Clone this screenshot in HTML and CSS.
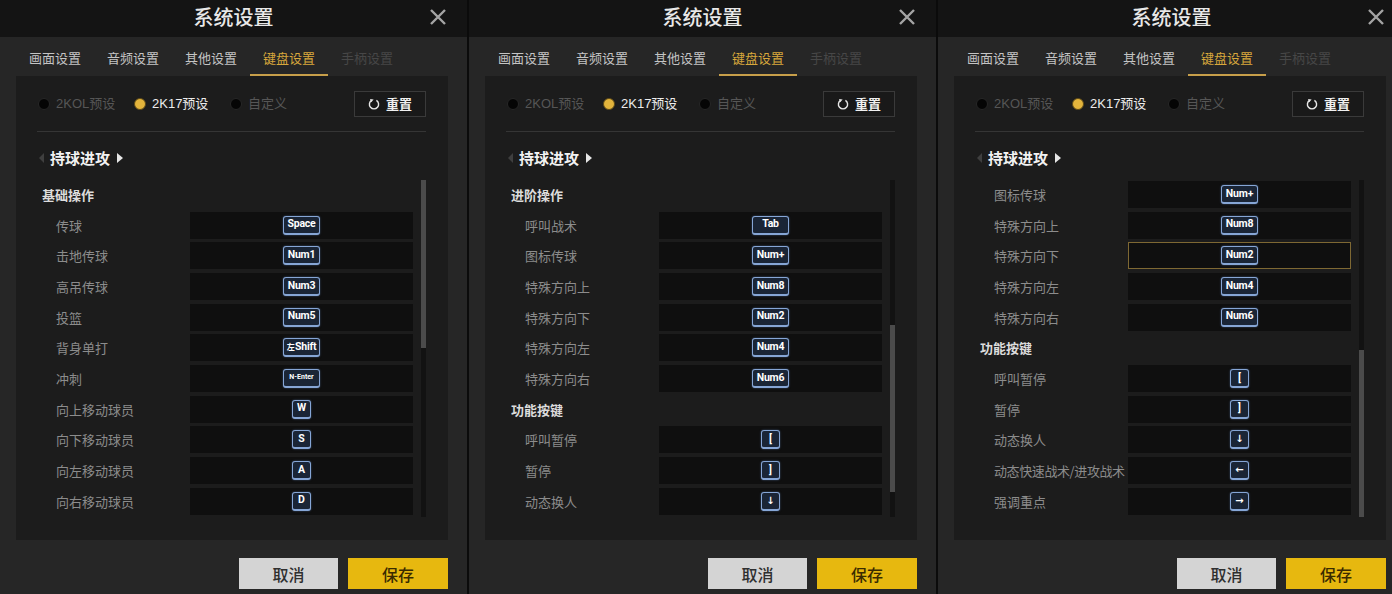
FILE: index.html
```html
<!DOCTYPE html>
<html lang="zh-CN">
<head>
  <meta charset="UTF-8">
  <title>系统设置 - 键盘设置</title>
  <link rel="stylesheet" href="styles.css">
</head>
<body>

<!-- 第一页：基础操作 -->
<div class="panel">
  <div class="title-bar">
    <div class="title">系统设置</div>
    <svg class="close" viewBox="0 0 18 18"><path d="M2 2 L16 16 M16 2 L2 16"/></svg>
  </div>
  <div class="tabs">
    <div class="tab">画面设置</div>
    <div class="tab">音频设置</div>
    <div class="tab">其他设置</div>
    <div class="tab active">键盘设置</div>
    <div class="tab disabled">手柄设置</div>
  </div>
  <div class="content">
    <div class="presets">
      <div class="option"><span class="radio"></span><span class="option-label">2KOL预设</span></div>
      <div class="option checked"><span class="radio"></span><span class="option-label">2K17预设</span></div>
      <div class="option"><span class="radio"></span><span class="option-label">自定义</span></div>
      <div class="reset">
        <svg class="reset-icon" viewBox="0 0 12 12"><path d="M3.6 2.4 A4.6 4.6 0 1 0 8.4 2.4"/><path class="head" d="M2 1 L5.6 1.4 L3.2 4.2 Z"/></svg>
        <span>重置</span>
      </div>
    </div>
    <div class="group-header">
      <span class="arrow-left"></span>
      <span class="group-name">持球进攻</span>
      <span class="arrow-right"></span>
    </div>
    <div class="list-wrap">
      <div class="list">
        <div class="section">基础操作</div>
        <div class="row"><div class="row-label">传球</div><div class="key-box"><span class="key wide">Space</span></div></div>
        <div class="row"><div class="row-label">击地传球</div><div class="key-box"><span class="key wide">Num1</span></div></div>
        <div class="row"><div class="row-label">高吊传球</div><div class="key-box"><span class="key wide">Num3</span></div></div>
        <div class="row"><div class="row-label">投篮</div><div class="key-box"><span class="key wide">Num5</span></div></div>
        <div class="row"><div class="row-label">背身单打</div><div class="key-box"><span class="key wide"><span class="key-cjk">左</span>Shift</span></div></div>
        <div class="row"><div class="row-label">冲刺</div><div class="key-box"><span class="key wide tiny">N-Enter</span></div></div>
        <div class="row"><div class="row-label">向上移动球员</div><div class="key-box"><span class="key">W</span></div></div>
        <div class="row"><div class="row-label">向下移动球员</div><div class="key-box"><span class="key">S</span></div></div>
        <div class="row"><div class="row-label">向左移动球员</div><div class="key-box"><span class="key">A</span></div></div>
        <div class="row"><div class="row-label">向右移动球员</div><div class="key-box"><span class="key">D</span></div></div>
      </div>
      <div class="scrollbar"><div class="thumb"></div></div>
    </div>
  </div>
  <div class="footer">
    <div class="btn btn-cancel">取消</div>
    <div class="btn btn-save">保存</div>
  </div>
</div>

<!-- 第二页：进阶操作 -->
<div class="panel">
  <div class="title-bar">
    <div class="title">系统设置</div>
    <svg class="close" viewBox="0 0 18 18"><path d="M2 2 L16 16 M16 2 L2 16"/></svg>
  </div>
  <div class="tabs">
    <div class="tab">画面设置</div>
    <div class="tab">音频设置</div>
    <div class="tab">其他设置</div>
    <div class="tab active">键盘设置</div>
    <div class="tab disabled">手柄设置</div>
  </div>
  <div class="content">
    <div class="presets">
      <div class="option"><span class="radio"></span><span class="option-label">2KOL预设</span></div>
      <div class="option checked"><span class="radio"></span><span class="option-label">2K17预设</span></div>
      <div class="option"><span class="radio"></span><span class="option-label">自定义</span></div>
      <div class="reset">
        <svg class="reset-icon" viewBox="0 0 12 12"><path d="M3.6 2.4 A4.6 4.6 0 1 0 8.4 2.4"/><path class="head" d="M2 1 L5.6 1.4 L3.2 4.2 Z"/></svg>
        <span>重置</span>
      </div>
    </div>
    <div class="group-header">
      <span class="arrow-left"></span>
      <span class="group-name">持球进攻</span>
      <span class="arrow-right"></span>
    </div>
    <div class="list-wrap">
      <div class="list">
        <div class="section">进阶操作</div>
        <div class="row"><div class="row-label">呼叫战术</div><div class="key-box"><span class="key wide">Tab</span></div></div>
        <div class="row"><div class="row-label">图标传球</div><div class="key-box"><span class="key wide">Num+</span></div></div>
        <div class="row"><div class="row-label">特殊方向上</div><div class="key-box"><span class="key wide">Num8</span></div></div>
        <div class="row"><div class="row-label">特殊方向下</div><div class="key-box"><span class="key wide">Num2</span></div></div>
        <div class="row"><div class="row-label">特殊方向左</div><div class="key-box"><span class="key wide">Num4</span></div></div>
        <div class="row"><div class="row-label">特殊方向右</div><div class="key-box"><span class="key wide">Num6</span></div></div>
        <div class="section">功能按键</div>
        <div class="row"><div class="row-label">呼叫暂停</div><div class="key-box"><span class="key">[</span></div></div>
        <div class="row"><div class="row-label">暂停</div><div class="key-box"><span class="key">]</span></div></div>
        <div class="row"><div class="row-label">动态换人</div><div class="key-box"><span class="key arrow">↓</span></div></div>
      </div>
      <div class="scrollbar"><div class="thumb mid"></div></div>
    </div>
  </div>
  <div class="footer">
    <div class="btn btn-cancel">取消</div>
    <div class="btn btn-save">保存</div>
  </div>
</div>

<!-- 第三页：功能按键 -->
<div class="panel">
  <div class="title-bar">
    <div class="title">系统设置</div>
    <svg class="close" viewBox="0 0 18 18"><path d="M2 2 L16 16 M16 2 L2 16"/></svg>
  </div>
  <div class="tabs">
    <div class="tab">画面设置</div>
    <div class="tab">音频设置</div>
    <div class="tab">其他设置</div>
    <div class="tab active">键盘设置</div>
    <div class="tab disabled">手柄设置</div>
  </div>
  <div class="content">
    <div class="presets">
      <div class="option"><span class="radio"></span><span class="option-label">2KOL预设</span></div>
      <div class="option checked"><span class="radio"></span><span class="option-label">2K17预设</span></div>
      <div class="option"><span class="radio"></span><span class="option-label">自定义</span></div>
      <div class="reset">
        <svg class="reset-icon" viewBox="0 0 12 12"><path d="M3.6 2.4 A4.6 4.6 0 1 0 8.4 2.4"/><path class="head" d="M2 1 L5.6 1.4 L3.2 4.2 Z"/></svg>
        <span>重置</span>
      </div>
    </div>
    <div class="group-header">
      <span class="arrow-left"></span>
      <span class="group-name">持球进攻</span>
      <span class="arrow-right"></span>
    </div>
    <div class="list-wrap">
      <div class="list">
        <div class="row"><div class="row-label">图标传球</div><div class="key-box"><span class="key wide">Num+</span></div></div>
        <div class="row"><div class="row-label">特殊方向上</div><div class="key-box"><span class="key wide">Num8</span></div></div>
        <div class="row"><div class="row-label">特殊方向下</div><div class="key-box focus"><span class="key wide">Num2</span></div></div>
        <div class="row"><div class="row-label">特殊方向左</div><div class="key-box"><span class="key wide">Num4</span></div></div>
        <div class="row"><div class="row-label">特殊方向右</div><div class="key-box"><span class="key wide">Num6</span></div></div>
        <div class="section">功能按键</div>
        <div class="row"><div class="row-label">呼叫暂停</div><div class="key-box"><span class="key">[</span></div></div>
        <div class="row"><div class="row-label">暂停</div><div class="key-box"><span class="key">]</span></div></div>
        <div class="row"><div class="row-label">动态换人</div><div class="key-box"><span class="key arrow">↓</span></div></div>
        <div class="row"><div class="row-label tight">动态快速战术/进攻战术</div><div class="key-box"><span class="key arrow">←</span></div></div>
        <div class="row"><div class="row-label">强调重点</div><div class="key-box"><span class="key arrow">→</span></div></div>
      </div>
      <div class="scrollbar"><div class="thumb end"></div></div>
    </div>
  </div>
  <div class="footer">
    <div class="btn btn-cancel">取消</div>
    <div class="btn btn-save">保存</div>
  </div>
</div>

</body>
</html>
```

FILE: styles.css
```css
body {
  margin: 0;
  width: 1392px;
  height: 594px;
  overflow: hidden;
  display: flex;
  gap: 2px;
  background: #0b0b0b;
  font-family: "Liberation Sans", "Noto Sans CJK SC", sans-serif;
  color: #e6e6e6;
}

.panel {
  flex: 0 0 467px;
  height: 594px;
  background: #262626;
  display: flex;
  flex-direction: column;
}

/* 标题栏 */
.title-bar {
  height: 37px;
  flex-shrink: 0;
  box-sizing: border-box;
  padding-bottom: 3px;
  background: #141414;
  display: grid;
  grid-template-columns: 1fr auto 1fr;
  align-items: center;
}

.title {
  grid-column: 2;
  font-family: "Noto Sans CJK SC", sans-serif;
  font-size: 20px;
  font-weight: 500;
  line-height: 1;
  color: #e8e8e8;
}

.close {
  grid-column: 3;
  justify-self: end;
  width: 18px;
  height: 18px;
  margin-right: 20px;
}

.close path {
  stroke: #a4a4a4;
  stroke-width: 2.4;
  fill: none;
}

/* 选项卡 */
.tabs {
  display: flex;
  height: 39px;
  flex-shrink: 0;
  padding-left: 16px;
}

.tab {
  width: 78px;
  box-sizing: border-box;
  padding-top: 4px;
  border-bottom: 2px solid transparent;
  display: flex;
  align-items: center;
  justify-content: center;
  font-family: "Noto Sans CJK SC", sans-serif;
  font-size: 13px;
  line-height: 1;
  color: #c4c4c4;
}

.tab.active {
  color: #d7a73c;
  border-bottom-color: #c79f4a;
}

.tab.disabled {
  color: #474747;
}

/* 内容区 */
.content {
  height: 464px;
  flex-shrink: 0;
  margin: 0 19px 0 16px;
  padding: 0 22px 0 21px;
  box-sizing: border-box;
  background: #1c1c1c;
  display: flex;
  flex-direction: column;
}

.presets {
  height: 55px;
  flex-shrink: 0;
  display: flex;
  align-items: center;
  border-bottom: 1px solid #353535;
}

.option {
  width: 96px;
  display: flex;
  align-items: center;
  gap: 6px;
  font-size: 13px;
  line-height: 1;
  color: #565656;
}

.option:first-child {
  margin-left: 1px;
}

.radio {
  width: 12px;
  height: 12px;
  box-sizing: border-box;
  border-radius: 50%;
  background: #050505;
  border: 1px solid #262626;
}

.option.checked {
  color: #ececec;
}

.option.checked .radio {
  background: #e3b43c;
  border: 1.5px solid #5e4a17;
}

.reset {
  margin-left: auto;
  width: 72px;
  height: 26px;
  box-sizing: border-box;
  border: 1px solid #3a3a3a;
  background: #191919;
  display: flex;
  align-items: center;
  justify-content: center;
  gap: 6px;
  font-family: "Noto Sans CJK SC", sans-serif;
  font-size: 13px;
  font-weight: bold;
  line-height: 1;
  color: #f0f0f0;
}

.reset-icon {
  width: 12px;
  height: 12px;
}

.reset-icon path {
  fill: none;
  stroke: #e8e8e8;
  stroke-width: 1.4;
}

.reset-icon path.head {
  fill: #e8e8e8;
  stroke: none;
}

.group-header {
  height: 48px;
  flex-shrink: 0;
  box-sizing: border-box;
  padding-top: 3px;
  display: flex;
  align-items: center;
}

.arrow-left {
  width: 0;
  height: 0;
  margin-left: 2px;
  border-top: 5px solid transparent;
  border-bottom: 5px solid transparent;
  border-right: 5px solid #3f3f3f;
}

.group-name {
  margin-left: 6px;
  font-family: "Noto Sans CJK SC", sans-serif;
  font-size: 15px;
  font-weight: bold;
  line-height: 1;
  color: #f2f2f2;
}

.arrow-right {
  width: 0;
  height: 0;
  margin-left: 7px;
  border-top: 5px solid transparent;
  border-bottom: 5px solid transparent;
  border-left: 6px solid #e6e6e6;
}

/* 按键列表 */
.list-wrap {
  height: 337px;
  flex-shrink: 0;
  display: flex;
}

.list {
  width: 376px;
  padding-top: 1px;
  display: flex;
  flex-direction: column;
  gap: 3.67px;
}

.section {
  height: 27px;
  flex-shrink: 0;
  padding-left: 5px;
  display: flex;
  align-items: center;
  font-family: "Noto Sans CJK SC", sans-serif;
  font-size: 13px;
  font-weight: bold;
  color: #dcdcdc;
}

.row {
  height: 27px;
  flex-shrink: 0;
  display: flex;
  align-items: center;
}

.row-label {
  width: 153px;
  box-sizing: border-box;
  padding-left: 19px;
  white-space: nowrap;
  font-family: "Noto Sans CJK SC", sans-serif;
  font-size: 13px;
  line-height: 1;
  color: #8c8c8c;
}

.row-label.tight {
  letter-spacing: -0.4px;
}

.key-box {
  width: 223px;
  height: 27px;
  box-sizing: border-box;
  background: #0f0f0f;
  display: flex;
  align-items: center;
  justify-content: center;
}

.key-box.focus {
  border: 1px solid #7e6833;
}

.key {
  box-sizing: border-box;
  min-width: 19px;
  height: 19px;
  padding: 0 2px;
  border: 1.5px solid #86a6d6;
  border-bottom-width: 2.5px;
  border-radius: 3px;
  background: #1a2536;
  box-shadow: 0 0 2px rgba(110, 150, 210, 0.55);
  display: inline-flex;
  align-items: center;
  justify-content: center;
  font-family: Roboto, "Liberation Sans", sans-serif;
  font-size: 10.5px;
  font-weight: bold;
  line-height: 1;
  color: #ffffff;
  white-space: nowrap;
}

.key.wide {
  width: 37px;
  padding: 0;
  letter-spacing: -0.2px;
}

.key.tiny {
  font-size: 7px;
  letter-spacing: 0;
}

.key.arrow {
  font-family: "DejaVu Sans", sans-serif;
  font-size: 10px;
}

.key-cjk {
  font-family: "Noto Sans CJK SC", sans-serif;
  font-size: 8px;
  margin-right: 0.5px;
}

.scrollbar {
  width: 5px;
  height: 337px;
  margin-left: 8px;
  background: #121212;
}

.thumb {
  height: 168px;
  background: #4b4b4b;
}

.thumb.mid {
  margin-top: 145px;
  height: 167px;
}

.thumb.end {
  margin-top: 170px;
  height: 167px;
}

/* 底部按钮 */
.footer {
  display: flex;
  justify-content: flex-end;
  gap: 10px;
  padding: 18px 19px 0 0;
}

.btn {
  width: 99px;
  height: 31px;
  display: flex;
  align-items: center;
  justify-content: center;
  font-family: "Noto Sans CJK SC", sans-serif;
  font-size: 16px;
  font-weight: 500;
  line-height: 1;
}

.btn-cancel {
  background: #d4d4d4;
  color: #2f2f2f;
}

.btn-save {
  width: 100px;
  background: #e7b80f;
  color: #3a2b00;
}
```
